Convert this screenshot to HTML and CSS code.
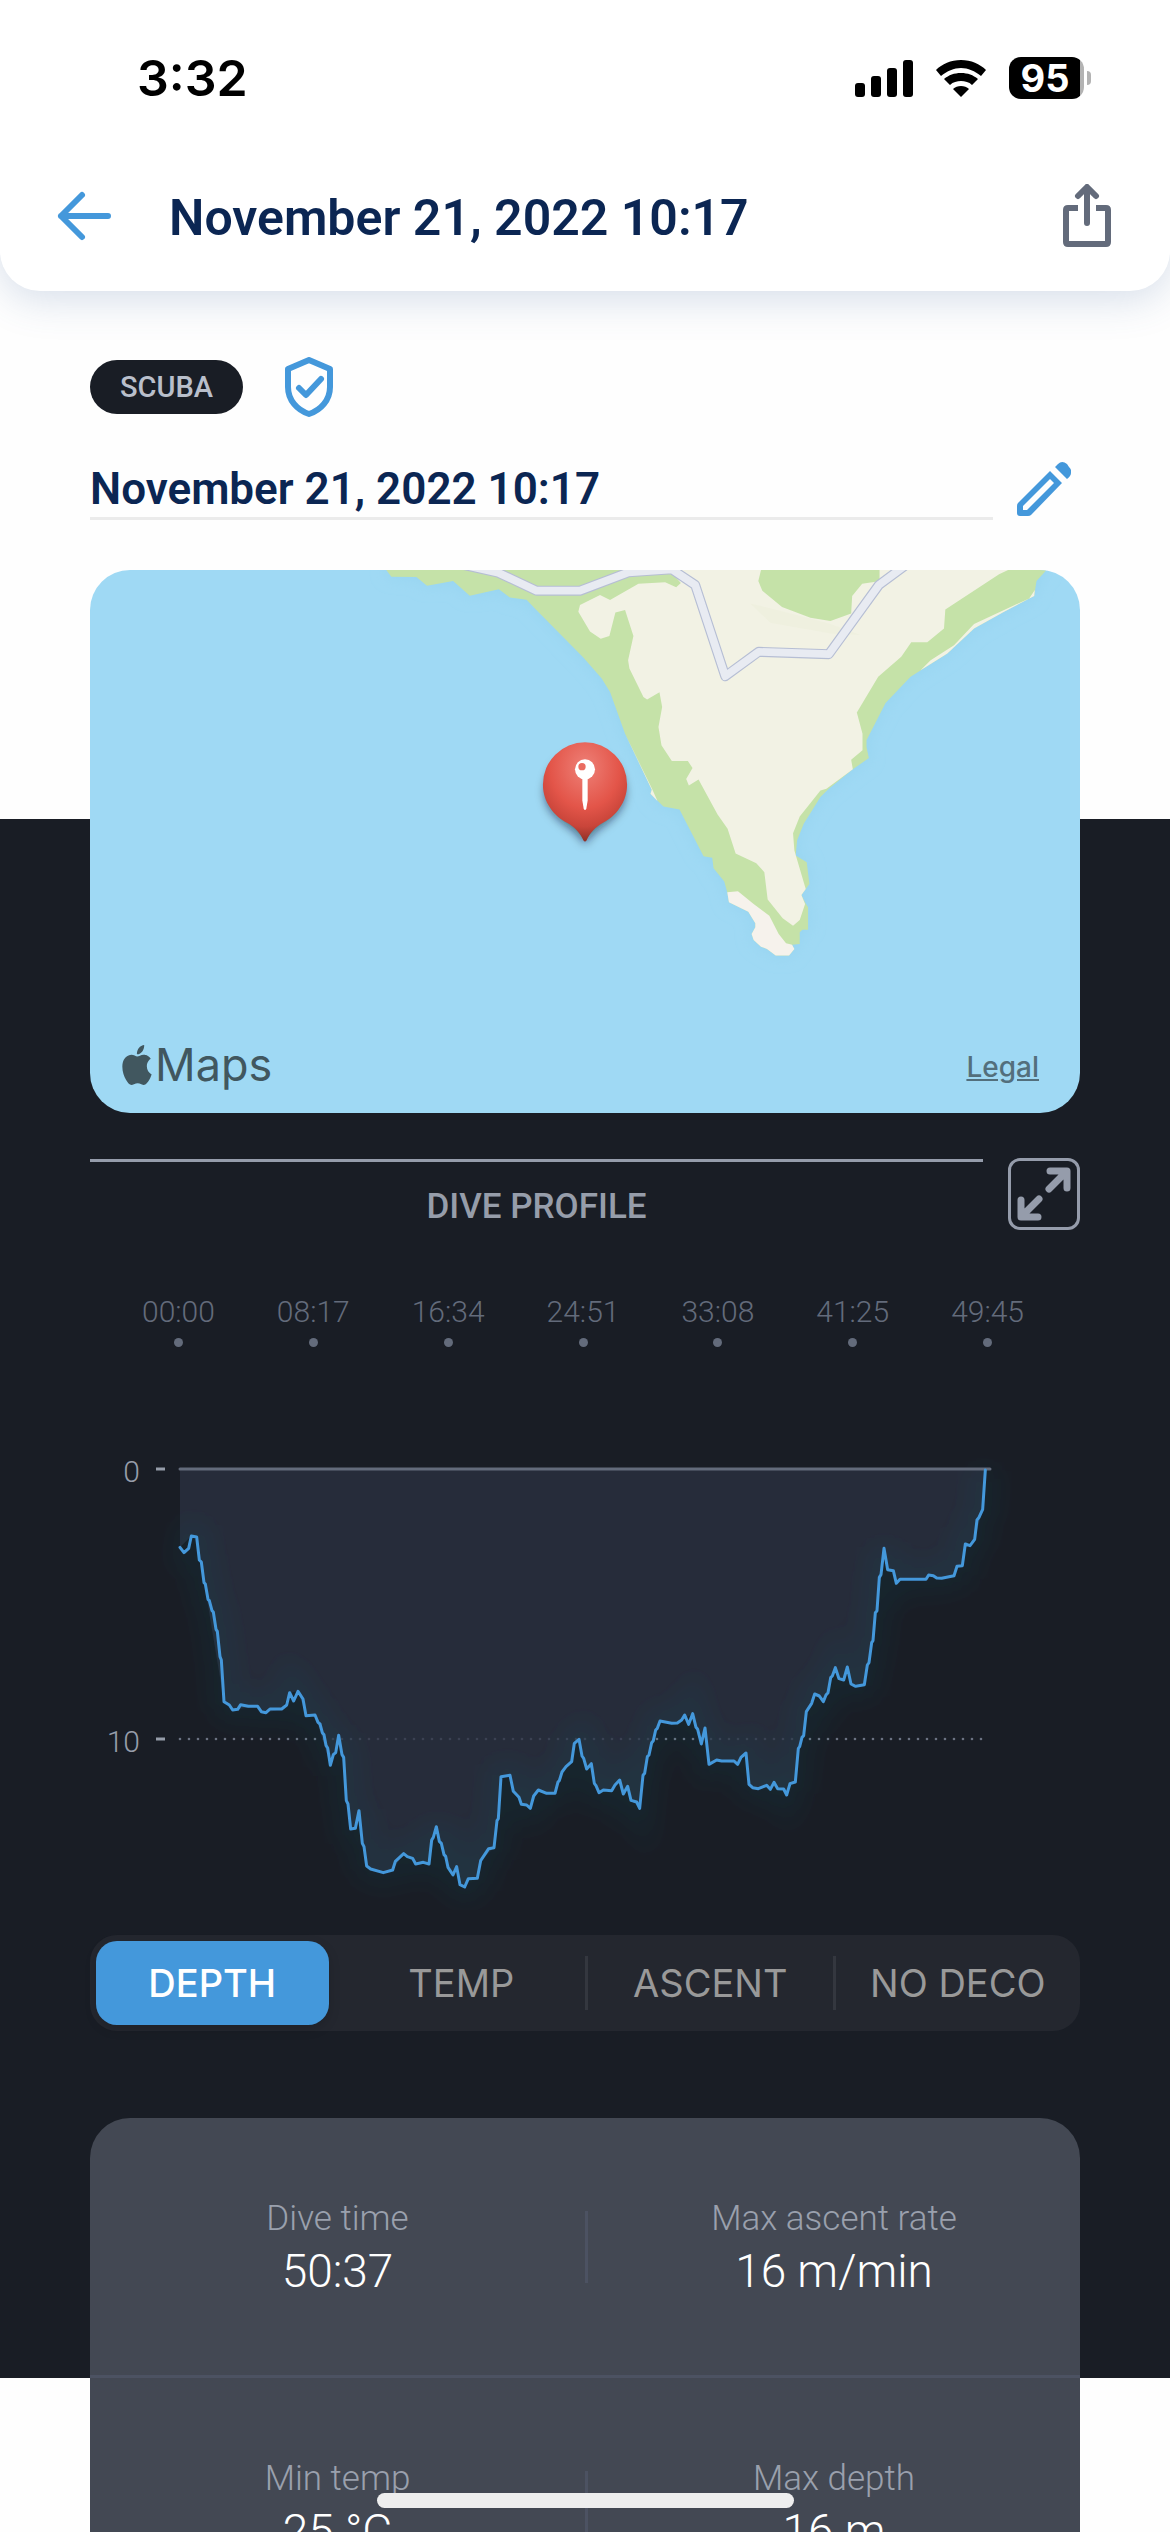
FILE: index.html
```
<!DOCTYPE html>
<html lang="en">
<head>
    <meta charset="UTF-8">
    <meta name="viewport" content="width=device-width, initial-scale=1.0">
    <title>November 21, 2022 10:17</title>
    <link rel="stylesheet" href="styles.css">
</head>
<body>

<div class="screen">

    <header class="header">
        <div class="status">
            <span class="clock">3:32</span>
            <div class="status-icons">
                <svg width="58" height="38" viewBox="0 0 58 38">
                    <rect x="0" y="24" width="10" height="14" rx="3"/>
                    <rect x="16" y="17" width="10" height="21" rx="3"/>
                    <rect x="32" y="9" width="10" height="29" rx="3"/>
                    <rect x="48" y="1" width="10" height="37" rx="3"/>
                </svg>
                <svg width="52" height="38" viewBox="0 0 52 38">
                    <path d="M26 1C36 1 45 5 51 11L46 17C40 12 33 9 26 9S12 12 6 17L1 11C7 5 16 1 26 1z"/>
                    <path d="M26 14c7 0 12 2 17 6l-6 6c-3-3-7-4-11-4s-8 1-11 4l-6-6c5-4 10-6 17-6z"/>
                    <path d="M26 27c3 0 6 1 8 3l-8 8-8-8c2-2 5-3 8-3z"/>
                </svg>
                <div class="battery">
                    <span class="battery-level">95</span>
                    <span class="battery-cap"></span>
                </div>
            </div>
        </div>
        <div class="title-bar">
            <button class="icon-button" aria-label="Back">
                <svg width="56" height="52" viewBox="0 0 56 52" class="line-icon blue">
                    <path d="M52 26H5M26 5L5 26l21 21"/>
                </svg>
            </button>
            <h1>November 21, 2022 10:17</h1>
            <button class="icon-button" aria-label="Share">
                <svg width="50" height="64" viewBox="0 0 50 64" class="line-icon grey">
                    <path stroke-linecap="butt" d="M16 24H6q-2 0-2 2v32q0 2 2 2h38q2 0 2-2V26q0-2-2-2H34"/>
                    <path d="M25 39V4M16 12l9-9 9 9"/>
                </svg>
            </button>
        </div>
    </header>

    <main class="content">

        <div class="tags">
            <span class="chip">SCUBA</span>
            <svg width="50" height="60" viewBox="0 0 50 60" class="line-icon blue">
                <path d="M25 3l21 9v18c0 13-9 23-21 27C13 53 4 43 4 30V12z"/>
                <path d="M15 31l7 7 15-16"/>
            </svg>
        </div>

        <div class="name-row">
            <h2>November 21, 2022 10:17</h2>
            <button class="icon-button" aria-label="Edit name">
                <svg width="54" height="54" viewBox="0 0 54 54">
                    <path class="pencil" fill-rule="evenodd" d="M0 44q0-2 1-3L33 9l12 12-31 32q-1 1-3 1H3q-3 0-3-3zM6 44v4h4l27-27-4-4zM38 5l3-3q4-4 9 0l2 3q3 3 2 6 0 3-4 6z"/>
                </svg>
            </button>
        </div>

        <div class="map">
            <svg class="map-drawing" viewBox="-840 60 2970 1626" preserveAspectRatio="xMidYMid slice">
                <defs>
                    <radialGradient id="pinFill" cx="50%" cy="25%" r="75%">
                        <stop offset="0" stop-color="#ee8077"/>
                        <stop offset="55%" stop-color="#e35549"/>
                        <stop offset="80%" stop-color="#c9453a"/>
                        <stop offset="100%" stop-color="#8e3026"/>
                    </radialGradient>
                    <filter id="pinShadow" x="-40%" y="-40%" width="180%" height="180%">
                        <feGaussianBlur stdDeviation="14"/>
                    </filter>
                    <filter id="shore" x="-20%" y="-20%" width="140%" height="140%">
                        <feGaussianBlur stdDeviation="24"/>
                    </filter>
                    <path id="land" d="M50 40V60L65 80 140 81 172 107 250 93 300 137 387 118 420 142 470 149 495 175 640 322 695 385 720 425 765 550 845 718 841 730 880 768 928 777 1000 917 1026 922 1030 953 1062 993 1071 1025 1076 1055 1134 1083 1155 1118 1155 1130 1144 1150 1150 1168 1172 1188 1190 1195 1216 1214 1256 1214 1272 1195 1265 1182 1288 1180 1288 1145 1296 1137 1313 1137 1313 1070 1305 1057 1293 1033 1317 1000 1309 935 1276 915 1280 870 1300 820 1350 740 1375 715 1447 657 1495 623 1488 590 1488 570 1545 458 1620 380 1730 310 1810 235 1900 185 1990 138 1997 93 2025 62V40z"/>
                </defs>
                <use href="#land" class="shallow" filter="url(#shore)"/>
                <use href="#land" class="forest"/>
                <path class="ground" d="M880 40L932 99 918 112 885 97 805 101 720 150 690 135 630 165 625 185 660 244 692 266 718 258 736 187 765 180 790 258 774 330 778 355 820 440 831 448 868 426 876 470 865 530 874 585 905 632 953 632 967 653 948 686 956 705 985 687 1042 792 1072 835 1096 909 1158 938 1182 965 1192 1047 1237 1103 1268 1125 1288 1108 1304 1060 1293 1033 1306 1015 1272 900 1268 848 1288 798 1350 720 1368 715 1447 657 1442 628 1476 600 1476 550 1459 487 1523 380 1592 320 1622 276 1670 276 1720 235 1724 178 1885 73 1912 60V40z"/>
                <path class="ground" d="M1650 360L1680 330 1750 285 1810 222 1975 145 1992 120 1990 138 1900 185 1810 235 1730 310zM765 550L845 718 841 730 862 752 846 716z"/>
                <path class="forest" d="M1177 40L1164 93 1176 122 1235 171 1320 203 1380 213 1442 190 1445 138 1475 101 1515 95 1527 90V40z"/>
                <path class="meadow" d="M1140 160L1320 205 1380 222 1470 255 1380 250 1200 218z"/>
                <path class="sand" d="M1071 1025L1103 1022 1150 1060 1197 1095 1225 1150 1247 1178 1265 1182 1272 1195 1256 1214 1216 1214 1190 1195 1172 1188 1150 1168 1144 1150 1155 1130 1155 1118 1134 1083 1076 1055z"/>
                <path class="road-edge" d="M260 40L385 68 500 122 630 122 775 67 905 58 975 105 1065 378 1165 305 1375 312 1525 105 1610 42"/>
                <path class="road" d="M260 40L385 68 500 122 630 122 775 67 905 58 975 105 1065 378 1165 305 1375 312 1525 105 1610 42"/>
                <path class="pin-shadow" filter="url(#pinShadow)" d="M645 606a120 120 0 0 1 120 120c0 55-45 85-76 108-20 14-34 30-44 48-10-18-24-34-44-48-31-23-76-53-76-108a120 120 0 0 1 120-120z"/>
                <path fill="url(#pinFill)" d="M645 576a126 126 0 0 1 126 126c0 55-35 95-72 115-25 13-40 33-49 52q-5 8-10 0c-9-19-24-39-49-52-37-20-72-60-72-115a126 126 0 0 1 126-126z"/>
                <path class="pin-needle" d="M637 680h16v70l-4 24q-4 10-8 0l-4-24z"/>
                <circle class="pin-needle" cx="645" cy="657" r="30"/>
                <circle class="pin-dot" cx="636" cy="649" r="11"/>
            </svg>
            <div class="map-footer">
                <div class="map-brand">
                    <svg width="36" height="40" viewBox="0 0 24 24" preserveAspectRatio="none">
                        <path d="M12.152 6.896c-.948 0-2.415-1.078-3.96-1.04-2.04.027-3.91 1.183-4.961 3.014-2.117 3.675-.546 9.103 1.519 12.09 1.013 1.454 2.208 3.09 3.792 3.039 1.52-.065 2.09-.987 3.935-.987 1.831 0 2.35.987 3.96.948 1.637-.026 2.676-1.48 3.676-2.948 1.156-1.688 1.636-3.325 1.662-3.415-.039-.013-3.182-1.221-3.22-4.857-.026-3.04 2.48-4.494 2.597-4.559-1.429-2.09-3.623-2.324-4.39-2.376-2-.156-3.675 1.09-4.61 1.09zM15.53 3.83c.843-1.012 1.4-2.427 1.245-3.83-1.207.052-2.662.805-3.532 1.818-.78.896-1.454 2.338-1.273 3.714 1.338.104 2.715-.688 3.559-1.701"/>
                    </svg>
                    <span>Maps</span>
                </div>
                <a href="#legal" class="legal">Legal</a>
            </div>
        </div>

        <div class="profile-header">
            <h3>DIVE PROFILE</h3>
            <button class="expand" aria-label="Expand chart">
                <svg width="54" height="54" viewBox="0 0 54 54">
                    <path d="M32 22L48 6M33 4h17v17M22 32L6 48M4 33v17h17"/>
                </svg>
            </button>
        </div>

        <div class="times">
            <span>00:00</span>
            <span>08:17</span>
            <span>16:34</span>
            <span>24:51</span>
            <span>33:08</span>
            <span>41:25</span>
            <span>49:45</span>
        </div>

        <svg class="chart" viewBox="0 0 990 470">
            <defs>
                <filter id="glow" x="-20%" y="-20%" width="140%" height="140%">
                    <feGaussianBlur stdDeviation="36"/>
                </filter>
                <!-- depth samples, 3 units to a pixel -->
                <path id="depth" d="M240 322L252 338 266 325 274 288 290 291 298 360 304 366 312 428 316 432 324 478 328 482 336 512 340 516 348 568 352 574 360 650 364 660 372 785 388 795 398 810 413 808 422 794 445 799 473 799 484 815 498 818 510 807 545 807 560 795 569 758 581 783 594 754 609 777 618 827 645 825 654 847 660 852 667 878 672 884 678 916 683 924 691 976 700 944 707 938 716 886 726 944 731 952 739 1082 744 1092 752 1167 766 1165 777 1112 787 1210 792 1220 800 1278 812 1287 850 1298 878 1290 886 1264 911 1241 922 1250 938 1255 947 1272 970 1267 987 1272 995 1200 1000 1192 1009 1160 1018 1204 1024 1210 1032 1244 1037 1249 1044 1282 1059 1305 1070 1280 1080 1334 1094 1341 1105 1316 1132 1315 1142 1262 1166 1226 1182 1223 1191 1142 1195 1136 1203 1010 1230 1006 1240 1054 1257 1072 1264 1093 1280 1095 1291 1105 1301 1068 1315 1050 1340 1060 1365 1060 1374 1026 1378 1022 1386 996 1398 980 1415 965 1423 910 1437 898 1446 948 1451 955 1460 987 1474 971 1483 1030 1488 1037 1497 1058 1510 1050 1535 1052 1545 1035 1559 1020 1570 1062 1583 1039 1593 1081 1610 1086 1619 1105 1629 1006 1634 1000 1642 950 1647 945 1655 908 1660 902 1667 870 1672 865 1680 843 1715 850 1732 849 1745 840 1754 825 1766 853 1778 821 1788 862 1793 868 1804 912 1815 864 1827 973 1850 960 1865 963 1902 963 1913 973 1923 952 1938 939 1947 1033 1958 1043 1975 1046 2000 1036 2011 1048 2022 1027 2033 1046 2051 1047 2060 1065 2070 1031 2086 1026 2095 925 2099 920 2106 892 2111 887 2119 815 2135 790 2144 762 2158 768 2170 785 2178 765 2184 758 2192 713 2197 708 2206 683 2217 716 2231 720 2242 681 2253 732 2267 739 2293 734 2302 675 2307 668 2315 608 2319 602 2326 518 2331 512 2338 412 2343 404 2352 325 2363 389 2380 392 2389 430 2400 418 2478 418 2486 405 2500 407 2510 414 2525 415 2562 407 2571 379 2587 377 2596 312 2610 317 2624 298 2631 240 2637 232 2648 208 2656 90"/>
            </defs>
            <text class="axis-label" x="50" y="42">0</text>
            <text class="axis-label" x="50" y="312">10</text>
            <path class="axis-tick" d="M66 29h9M66 299h9"/>
            <svg width="990" height="470" viewBox="-30 0 2970 1410">
                <path class="grid-line" d="M240 897H2646"/>
                <path class="area" d="M240 322L274 288 290 291 372 785 398 810 473 799 498 818 545 807 569 758 594 754 618 827 645 825 691 976 716 886 731 952 752 1167 766 1165 777 1112 800 1278 850 1298 878 1290 911 1241 947 1272 987 1272 1009 1160 1044 1282 1059 1305 1070 1280 1080 1334 1094 1341 1105 1316 1132 1315 1142 1262 1182 1223 1203 1010 1230 1006 1240 1054 1264 1093 1291 1105 1315 1050 1340 1060 1365 1060 1386 996 1415 965 1423 910 1437 898 1460 987 1474 971 1497 1058 1535 1052 1559 1020 1570 1062 1583 1039 1593 1081 1619 1105 1629 1006 1655 908 1680 843 1732 849 1778 821 1804 912 1815 864 1827 973 1850 960 1913 973 1938 939 1947 1033 1975 1046 2000 1036 2051 1047 2060 1065 2070 1031 2086 1026 2095 925 2111 887 2119 815 2144 762 2170 785 2206 683 2217 716 2231 720 2242 681 2253 732 2293 734 2315 608 2343 404 2352 325 2363 389 2380 392 2389 430 2400 418 2478 418 2486 405 2525 415 2562 407 2571 379 2587 377 2596 312 2624 298 2648 208 2656 87H240z"/>
                <use href="#depth" class="glow" filter="url(#glow)"/>
                <path class="surface" d="M240 87H2670"/>
                <use href="#depth" class="curve"/>
            </svg>
        </svg>

        <div class="tabs">
            <button class="tab active">DEPTH</button>
            <button class="tab">TEMP</button>
            <button class="tab">ASCENT</button>
            <button class="tab">NO DECO</button>
        </div>

        <section class="stats">
            <div class="stats-row">
                <div class="stat">
                    <span class="stat-label">Dive time</span>
                    <span class="stat-value">50:37</span>
                </div>
                <div class="stat">
                    <span class="stat-label">Max ascent rate</span>
                    <span class="stat-value">16 m/min</span>
                </div>
            </div>
            <div class="stats-row">
                <div class="stat">
                    <span class="stat-label">Min temp</span>
                    <span class="stat-value">25 °C</span>
                </div>
                <div class="stat">
                    <span class="stat-label">Max depth</span>
                    <span class="stat-value">16 m</span>
                </div>
            </div>
        </section>

    </main>

    <div class="home-indicator"></div>
</div>

</body>
</html>
```
FILE: styles.css
```
* {
    box-sizing: border-box;
}
body {
    margin: 0;
    background-color: #fefefe;
    font-family: Roboto, "Liberation Sans", sans-serif;
    color: #0b2653;
}
h1, h2, h3 {
    margin: 0;
}
button {
    font-family: inherit;
    padding: 0;
    border: none;
    background: none;
    cursor: pointer;
}
svg {
    display: block;
}
.screen {
    position: relative;
    height: 100vh;
    overflow: hidden;
}

/* Header */
.header {
    position: relative;
    height: 291px;
    background-color: #ffffff;
    border-radius: 0 0 40px 40px;
    box-shadow: 0 8px 40px rgba(70, 105, 160, 0.22);
}
.status {
    display: flex;
    align-items: center;
    justify-content: space-between;
    height: 156px;
    padding: 0 79px 0 137px;
    color: #000000;
    font-family: Inter, sans-serif;
}
.clock {
    font-size: 50px;
    font-weight: 600;
}
.status-icons {
    display: flex;
    align-items: center;
    gap: 22px;
}
.battery {
    display: flex;
    align-items: center;
    gap: 3px;
}
.battery-level {
    width: 75px;
    height: 42px;
    padding-right: 3px;
    border-radius: 12px;
    background: linear-gradient(90deg, #000000 71px, #b3b3b3 71px);
    color: #ffffff;
    font-size: 38px;
    font-weight: 700;
    line-height: 42px;
    text-align: center;
}
.battery-cap {
    width: 4px;
    height: 14px;
    border-radius: 0 5px 5px 0;
    background-color: #b3b3b3;
}
.title-bar {
    display: flex;
    align-items: center;
    gap: 57px;
    height: 120px;
    padding: 0 58px 0 56px;
}
h1 {
    flex: 1;
    padding-top: 4px;
    font-size: 50px;
    font-weight: 600;
}
.line-icon {
    fill: none;
    stroke-width: 6;
    stroke-linecap: round;
    stroke-linejoin: round;
}
.blue {
    stroke: #4498db;
}
.grey {
    stroke: #636b7b;
}
.pencil {
    fill: #4498db;
}

/* Content: the dark panel starts behind the map and ends behind the stats */
.content {
    padding: 66px 90px 0;
    background: linear-gradient(#191d25, #191d25) 0 528px / 100% 1559px no-repeat;
}
.tags {
    display: flex;
    align-items: center;
    gap: 41px;
}
.chip {
    padding: 0 30px;
    border-radius: 27px;
    background-color: #191d25;
    color: #b9bfcb;
    font-size: 29px;
    font-weight: 500;
    line-height: 54px;
}
.name-row {
    display: flex;
    align-items: flex-start;
    gap: 24px;
    margin-top: 45px;
    padding-right: 9px;
}
h2 {
    flex: 1;
    border-bottom: 3px solid #ebebeb;
    font-size: 44px;
    font-weight: 600;
    line-height: 55px;
}
.map {
    position: relative;
    height: 543px;
    margin-top: 50px;
    border-radius: 40px;
    overflow: hidden;
    background-color: #9fd9f4;
}
.map-drawing {
    width: 100%;
    height: 100%;
}
.shallow {
    fill: #96d4f0;
}
.forest {
    fill: #c5e2a8;
}
.ground {
    fill: #f2f2e4;
}
.meadow {
    fill: #eff0df;
}
.sand {
    fill: #f6f2ec;
}
.road-edge {
    fill: none;
    stroke: #b6bed4;
    stroke-width: 30;
    stroke-linejoin: round;
}
.road {
    fill: none;
    stroke: #e8ebf2;
    stroke-width: 23;
    stroke-linejoin: round;
}
.pin-shadow {
    fill: rgba(0, 20, 40, 0.55);
}
.pin-needle {
    fill: #ffffff;
}
.pin-dot {
    fill: #ea6c61;
}
.map-footer {
    position: absolute;
    left: 29px;
    right: 41px;
    bottom: 20px;
    display: flex;
    align-items: center;
    justify-content: space-between;
}
.map-brand {
    display: flex;
    align-items: center;
    color: #41575f;
    fill: #41575f;
    font-family: Inter, sans-serif;
    font-size: 45px;
    line-height: 56px;
}
.legal {
    padding-top: 4px;
    color: #536f7c;
    font-family: Inter, sans-serif;
    font-size: 28px;
    font-weight: 500;
}

/* Dive profile */
.profile-header {
    display: flex;
    gap: 25px;
    margin-top: 45px;
}
h3 {
    flex: 1;
    margin-top: 1px;
    padding-top: 24px;
    border-top: 3px solid #959cab;
    color: #969daa;
    font-size: 35px;
    font-weight: 500;
    line-height: 42px;
    text-align: center;
}
.expand {
    display: flex;
    align-items: center;
    justify-content: center;
    width: 72px;
    height: 72px;
    border: 3px solid #959cab;
    border-radius: 12px;
}
.expand path {
    fill: none;
    stroke: #959cab;
    stroke-width: 7;
    stroke-linecap: round;
    stroke-linejoin: round;
}
.times {
    display: grid;
    grid-template-columns: repeat(6, 1fr) auto;
    margin-top: 64px;
    padding: 0 56px 0 52px;
    color: #636b7b;
    font-size: 30px;
    font-weight: 300;
    line-height: 36px;
}
.times span {
    display: flex;
    flex-direction: column;
    align-items: center;
    justify-self: start;
    gap: 8px;
}
.times span::after {
    content: "";
    width: 9px;
    height: 9px;
    border-radius: 50%;
    background-color: #636b7b;
}
.chart {
    width: 100%;
    margin-top: 93px;
}
.axis-label {
    fill: #969daa;
    font-size: 30px;
    font-weight: 300;
    text-anchor: end;
}
.axis-tick {
    stroke: #969daa;
    stroke-width: 3;
}
.grid-line {
    fill: none;
    stroke: #6b7282;
    stroke-width: 8;
    stroke-linecap: round;
    stroke-dasharray: 0 27;
}
.area {
    fill: #2b3242;
    fill-opacity: 0.75;
}
.glow {
    fill: none;
    stroke: #1f7076;
    stroke-width: 80;
    stroke-opacity: 0.1;
}
.surface {
    stroke: #636b7b;
    stroke-width: 9;
    stroke-linecap: round;
}
.curve {
    fill: none;
    stroke: #4498db;
    stroke-width: 9;
    stroke-linecap: round;
    stroke-linejoin: round;
}

/* Chart tabs */
.tabs {
    display: grid;
    grid-template-columns: repeat(4, 1fr);
    align-items: center;
    height: 96px;
    margin-top: 25px;
    border-radius: 27px;
    background-color: #24272f;
}
.tab {
    height: 54px;
    color: #999999;
    font-family: Inter, sans-serif;
    font-size: 38px;
}
.tab + .tab + .tab {
    border-left: 3px solid #34373f;
}
.tab.active {
    height: 84px;
    margin: 0 9px 0 6px;
    border-radius: 21px;
    background-color: #4498db;
    box-shadow: 0 4px 12px rgba(0, 0, 0, 0.15);
    color: #ffffff;
    font-weight: 500;
}

/* Stats */
.stats {
    margin-top: 87px;
    border-radius: 40px;
    background-color: #434853;
}
.stats-row {
    display: grid;
    grid-template-columns: 1fr 1fr;
    align-items: center;
    height: 260px;
    border-bottom: 3px solid #4c5262;
}
.stat {
    display: flex;
    flex-direction: column;
    align-items: center;
    justify-content: center;
    height: 72px;
    color: #ffffff;
    font-weight: 300;
}
.stat + .stat {
    border-left: 3px solid #4c5262;
}
.stat-label {
    color: #9aa0ad;
    font-size: 35px;
    line-height: 48px;
}
.stat-value {
    font-size: 46px;
    line-height: 56px;
}

.home-indicator {
    position: absolute;
    left: 50%;
    bottom: 24px;
    width: 417px;
    height: 15px;
    margin-left: -208px;
    border-radius: 8px;
    background-color: #eeeeee;
}
```
